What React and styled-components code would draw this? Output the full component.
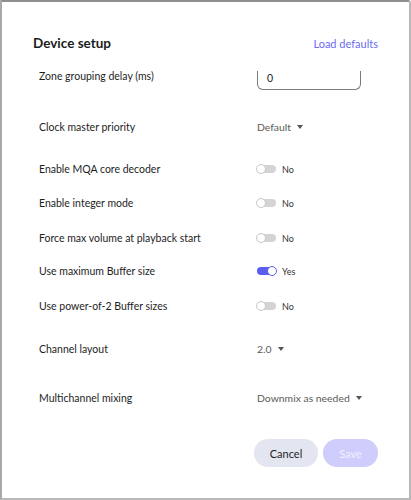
import React from 'react';
import styled, { createGlobalStyle } from 'styled-components';

const GlobalStyle = createGlobalStyle`
  html, body {
    margin: 0;
    padding: 0;
    background: #ffffff;
  }
  * {
    box-sizing: border-box;
  }
`;

const Frame = styled.div`
  width: 411px;
  height: 500px;
  border-top: 2px solid #8e8e8e;
  border-left: 2px solid #a9a9a9;
  border-right: 2px solid #b8b8b8;
  border-bottom: 2px solid #b8b8b8;
  border-top-right-radius: 3px;
  background: #fff;
  font-family: Lato, 'Open Sans', sans-serif;
  color: #1f1f1f;
`;

const Dialog = styled.div`
  display: flex;
  flex-direction: column;
  padding: 32px 31px 0 31px;
`;

const Header = styled.div`
  display: flex;
  justify-content: space-between;
  align-items: center;
  height: 18px;
`;

const Title = styled.h2`
  margin: 0;
  font-size: 13.5px;
  font-weight: 700;
  color: #1c1c1c;
`;

const LinkButton = styled.button`
  border: none;
  background: none;
  padding: 0;
  font-family: inherit;
  font-size: 11px;
  color: #6a6cf0;
  cursor: pointer;
`;

const Row = styled.div`
  display: grid;
  grid-template-columns: 218px 1fr;
  align-items: center;
  height: 20px;
  margin-top: ${(p) => p.$space}px;
  padding-left: 6px;
`;

const Label = styled.span`
  font-size: 10.5px;
  color: #1e1e1e;
`;

const Input = styled.div`
  width: 104px;
  height: 19px;
  margin: 4px 0 -4px;
  border: 1px solid #7a7a7a;
  border-top: none;
  border-radius: 0 0 6px 6px;
  padding: 0 9px;
  font-size: 10.5px;
  line-height: 14px;
  color: #222;
`;

const Select = styled.div`
  display: flex;
  align-items: center;
  gap: 6px;
  font-size: 10.4px;
  color: #5a5a5a;
`;

const Caret = styled.span`
  width: 0;
  height: 0;
  border-left: 3px solid transparent;
  border-right: 3px solid transparent;
  border-top: 4px solid #555;
`;

const ToggleWrap = styled.div`
  display: flex;
  align-items: center;
  gap: 6px;
  font-size: 9px;
  color: #333;
`;

const Track = styled.span`
  position: relative;
  width: 19px;
  height: 8px;
  border-radius: 4px;
  background: ${(p) => (p.$on ? '#5c5ef0' : '#d4d4d4')};
`;

const Knob = styled.span`
  position: absolute;
  top: -1px;
  left: ${(p) => (p.$on ? '10px' : '-1px')};
  width: 10px;
  height: 10px;
  border-radius: 50%;
  background: #fff;
  border: 1.5px solid ${(p) => (p.$on ? '#5c5ef0' : '#c8c8c8')};
`;

const Actions = styled.div`
  display: flex;
  justify-content: flex-end;
  gap: 5px;
  margin-top: 31px;
`;

const Button = styled.button`
  height: 28px;
  width: ${(p) => p.$w}px;
  padding: 0;
  border: none;
  border-radius: 14px;
  font-family: inherit;
  font-size: 11px;
  background: ${(p) => (p.$primary ? '#cfcdfc' : '#e3e6f0')};
  color: ${(p) => (p.$primary ? '#f1f0ff' : '#1f1f1f')};
`;

const Toggle = ({ on }) => (
  <ToggleWrap>
    <Track $on={on}>
      <Knob $on={on} />
    </Track>
    {on ? 'Yes' : 'No'}
  </ToggleWrap>
);

const Dropdown = ({ value }) => (
  <Select>
    {value}
    <Caret />
  </Select>
);

const App = () => (
  <Frame>
    <GlobalStyle />
    <Dialog>
      <Header>
        <Title>Device setup</Title>
        <LinkButton>Load defaults</LinkButton>
      </Header>
      <Row $space={14}>
        <Label>Zone grouping delay (ms)</Label>
        <Input>0</Input>
      </Row>
      <Row $space={31}>
        <Label>Clock master priority</Label>
        <Dropdown value="Default" />
      </Row>
      <Row $space={22}>
        <Label>Enable MQA core decoder</Label>
        <Toggle on={false} />
      </Row>
      <Row $space={14}>
        <Label>Enable integer mode</Label>
        <Toggle on={false} />
      </Row>
      <Row $space={15}>
        <Label>Force max volume at playback start</Label>
        <Toggle on={false} />
      </Row>
      <Row $space={13}>
        <Label>Use maximum Buffer size</Label>
        <Toggle on />
      </Row>
      <Row $space={15}>
        <Label>Use power-of-2 Buffer sizes</Label>
        <Toggle on={false} />
      </Row>
      <Row $space={23}>
        <Label>Channel layout</Label>
        <Dropdown value="2.0" />
      </Row>
      <Row $space={29}>
        <Label>Multichannel mixing</Label>
        <Dropdown value="Downmix as needed" />
      </Row>
      <Actions>
        <Button $w={64}>Cancel</Button>
        <Button $w={55} $primary>
          Save
        </Button>
      </Actions>
    </Dialog>
  </Frame>
);

export default App;
